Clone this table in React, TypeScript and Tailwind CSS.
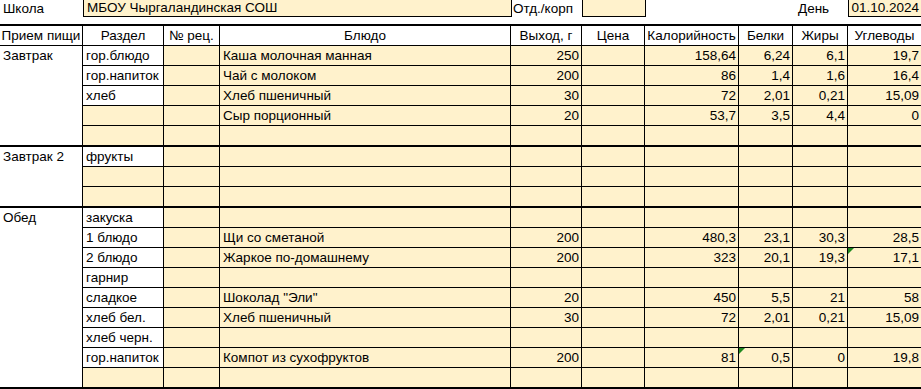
type RowData = {
  section: string;
  sectionTan?: boolean;
  dish?: string;
  vals?: string[];
  tri?: number;
};

type Group = { meal: string; rows: RowData[] };

const groups: Group[] = [
  {
    meal: "Завтрак",
    rows: [
      { section: "гор.блюдо", dish: "Каша молочная манная", vals: ["250", "", "158,64", "6,24", "6,1", "19,7"] },
      { section: "гор.напиток", dish: "Чай с молоком", vals: ["200", "", "86", "1,4", "1,6", "16,4"] },
      { section: "хлеб", dish: "Хлеб пшеничный", vals: ["30", "", "72", "2,01", "0,21", "15,09"] },
      { section: "", sectionTan: true, dish: "Сыр порционный", vals: ["20", "", "53,7", "3,5", "4,4", "0"] },
      { section: "", sectionTan: true },
    ],
  },
  {
    meal: "Завтрак 2",
    rows: [
      { section: "фрукты" },
      { section: "", sectionTan: true },
      { section: "", sectionTan: true },
    ],
  },
  {
    meal: "Обед",
    rows: [
      { section: "закуска" },
      { section: "1 блюдо", dish: "Щи со сметаной", vals: ["200", "", "480,3", "23,1", "30,3", "28,5"] },
      { section: "2 блюдо", dish: "Жаркое по-домашнему", vals: ["200", "", "323", "20,1", "19,3", "17,1"], tri: 5 },
      { section: "гарнир" },
      { section: "сладкое", dish: 'Шоколад "Эли"', vals: ["20", "", "450", "5,5", "21", "58"] },
      { section: "хлеб бел.", dish: "Хлеб пшеничный", vals: ["30", "", "72", "2,01", "0,21", "15,09"] },
      { section: "хлеб черн." },
      { section: "гор.напиток", dish: "Компот из сухофруктов", vals: ["200", "", "81", "0,5", "0", "19,8"], tri: 3 },
      { section: "", sectionTan: true },
    ],
  },
];

const headers = ["Раздел", "№ рец.", "Блюдо", "Выход, г", "Цена", "Калорийность", "Белки", "Жиры", "Углеводы"];

const grid = "grid grid-cols-[81px_56px_291px_71px_63px_94px_54px_55px_73px]";
const tan = "bg-[#fff2cc]";

function DataRow({ row, last }: { row: RowData; last: boolean }) {
  const vals = row.vals ?? ["", "", "", "", "", ""];
  const rowCls = last ? "h-[19px]" : "h-5 border-b border-black";
  return (
    <div className={`${grid} ${rowCls}`}>
      <div className={`flex items-center whitespace-nowrap border-r border-black px-[3px] ${row.sectionTan ? tan : "bg-white"}`}>
        {row.section}
      </div>
      <div className={`border-r border-black ${tan}`} />
      <div className={`flex items-center border-r border-black px-[3px] ${tan}`}>{row.dish}</div>
      {vals.map((v, i) => (
        <div
          key={i}
          className={`relative flex items-center justify-end pr-[2px] ${tan} ${i < 5 ? "border-r border-black" : ""}`}
        >
          {row.tri === i && (
            <span className="absolute left-0 top-0 h-0 w-0 border-t-[6px] border-r-[6px] border-t-[#1f8a1f] border-r-transparent" />
          )}
          {v}
        </div>
      ))}
    </div>
  );
}

export default function App() {
  return (
    <div className="w-[921px] h-[389px] overflow-hidden bg-white text-[13.5px] leading-none text-black font-['Liberation_Sans',Arial,sans-serif]">
      {/* top info line */}
      <div className="flex h-[17px]">
        <div className="flex w-[83px] items-center px-[3px]">Школа</div>
        <div className={`flex w-[429px] items-center border-x border-b border-black px-[3px] ${tan}`}>
          МБОУ Чыргаландинская СОШ
        </div>
        <div className="flex w-[70px] items-center whitespace-nowrap px-[1px]">Отд./корп</div>
        <div className={`w-[64px] border-x border-b border-black ${tan}`} />
        <div className="w-[148px]" />
        <div className="flex w-[54px] items-center pl-[4px]">День</div>
        <div className={`flex flex-1 items-center justify-end border-l border-b border-black pr-[2px] ${tan}`}>
          01.10.2024
        </div>
      </div>
      <div className="h-[7px]" />

      {/* column headers */}
      <div className="flex h-[22px] border-y-2 border-b border-black">
        <div className="flex w-[83px] items-center justify-center whitespace-nowrap border-r border-black">Прием пищи</div>
        <div className={grid}>
          {headers.map((h, i) => (
            <div
              key={h}
              className={`flex items-center justify-center whitespace-nowrap ${i < headers.length - 1 ? "border-r border-black" : ""}`}
            >
              {h}
            </div>
          ))}
        </div>
      </div>

      {groups.map((g) => (
        <div key={g.meal} className="flex border-b-2 border-black">
          <div className="w-[83px] border-r border-black">
            <div className="flex h-5 items-center px-[3px]">{g.meal}</div>
          </div>
          <div className="flex flex-col">
            {g.rows.map((r, i) => (
              <DataRow key={i} row={r} last={i === g.rows.length - 1} />
            ))}
          </div>
        </div>
      ))}
    </div>
  );
}
